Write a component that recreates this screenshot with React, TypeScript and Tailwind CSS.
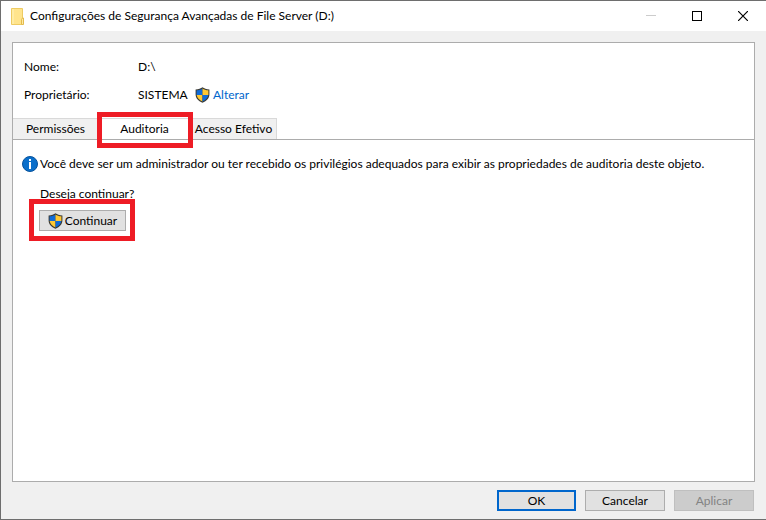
import { useState } from "react";

const tabs = ["Permissões", "Auditoria", "Acesso Efetivo"] as const;

const tabWidths = {
  Permissões: "w-[86px]",
  Auditoria: "w-[92px]",
  "Acesso Efetivo": "w-[86px]",
};

function FolderIcon() {
  return (
    <svg width="14" height="17" viewBox="0 0 14 17" aria-hidden="true">
      <path d="M0.5 0.5h11v16h-11z" fill="#ffe48c" stroke="#eecb62" />
      <path d="M1 1h2v15H1z" fill="#ffeca4" />
      <path d="M10.5 16.5v-5l1-1.5h1v6.5z" fill="#ffe9a2" stroke="#e3bb4c" />
    </svg>
  );
}

function ShieldIcon() {
  return (
    <svg width="15" height="16" viewBox="0 0 15 16" className="shrink-0" aria-hidden="true">
      <path
        d="M7.5 0.3C5.8 1.6 3.6 2.3 0.6 2.4v4.8c0 3.8 2.6 6.7 6.9 8.5 4.3-1.8 6.9-4.7 6.9-8.5V2.4c-3-.1-5.2-.8-6.9-2.1z"
        fill="#3b3a34"
      />
      <path d="M7.5 1.5C6 2.6 4 3.2 1.6 3.3V8h5.9z" fill="#0f6bd8" />
      <path d="M7.5 1.5c1.5 1.1 3.5 1.7 5.9 1.8V8H7.5z" fill="#ffc832" />
      <path d="M1.7 8c.4 2.9 2.4 5.1 5.8 6.6V8z" fill="#ffc832" />
      <path d="M13.3 8c-.4 2.9-2.4 5.1-5.8 6.6V8z" fill="#0f6bd8" />
    </svg>
  );
}

function InfoIcon() {
  return (
    <svg width="16" height="16" viewBox="0 0 16 16" className="shrink-0" aria-hidden="true">
      <circle cx="8" cy="8" r="7.5" fill="#0a6fcb" stroke="#07529c" />
      <path d="M7 3h2v2H7zM7 6h2v7H7z" fill="#fff" />
    </svg>
  );
}

function TitleBar() {
  return (
    <header className="flex h-[30px] items-center bg-white pl-[10px]">
      <FolderIcon />
      <h1 className="ml-[5px] flex-1 whitespace-nowrap">
        Configurações de Segurança Avançadas de File Server (D:)
      </h1>
      <button type="button" disabled aria-label="Minimizar" className="flex h-full w-[46px] items-center justify-center">
        <svg width="10" height="10" viewBox="0 0 10 10" shapeRendering="crispEdges">
          <path d="M0 4h10v1H0z" fill="#cccccc" />
        </svg>
      </button>
      <button type="button" aria-label="Maximizar" className="flex h-full w-[46px] items-center justify-center">
        <svg width="10" height="10" viewBox="0 0 10 10" shapeRendering="crispEdges">
          <path d="M0.5 0.5h9v9h-9z" fill="none" stroke="#000" />
        </svg>
      </button>
      <button type="button" aria-label="Fechar" className="flex h-full w-[46px] items-center justify-center">
        <svg width="10" height="10" viewBox="0 0 10 10">
          <path d="M0 0l10 10M10 0L0 10" stroke="#000" strokeWidth="1.2" />
        </svg>
      </button>
    </header>
  );
}

export default function App() {
  const [activeTab, setActiveTab] = useState<(typeof tabs)[number]>("Auditoria");

  return (
    <div className="flex min-h-screen flex-col border-t border-b border-l border-[#6e6e6e] bg-[#f0f0f0] font-['Lato','Open_Sans',sans-serif] text-[12px] leading-4 text-black">
      <TitleBar />

      <main className="mx-[11px] mt-[11px] flex flex-1 flex-col border border-[#acacac] bg-white">
        <dl className="grid grid-cols-[114px_1fr] gap-y-3 pt-4 pl-[11px]">
          <dt>Nome:</dt>
          <dd>D:\</dd>
          <dt>Proprietário:</dt>
          <dd className="flex items-center">
            <span className="w-[57px]">SISTEMA</span>
            <a href="#alterar" className="flex items-center gap-[3px] text-[#0066cc]">
              <ShieldIcon />
              Alterar
            </a>
          </dd>
        </dl>

        <div role="tablist" className="mt-[15px] flex h-[22px] border-b border-[#acacac]">
          {tabs.map((tab) => (
            <div key={tab} className={`relative ${tabWidths[tab]}`}>
              <button
                type="button"
                role="tab"
                aria-selected={tab === activeTab}
                onClick={() => setActiveTab(tab)}
                className={`h-[21px] w-full border-t border-r border-[#d9d9d9] whitespace-nowrap ${
                  tab === activeTab ? "bg-white" : "bg-[#f0f0f0]"
                }`}
              >
                {tab}
              </button>
              {tab === "Auditoria" ? (
                <span className="pointer-events-none absolute -inset-x-[2px] -top-[6px] -bottom-[9px] z-10 border-[5px] border-[#ee1c25]" />
              ) : null}
            </div>
          ))}
        </div>

        <section role="tabpanel" className="flex flex-1 flex-col items-start pt-4 pl-[9px]">
          <p className="flex items-center gap-[2px] whitespace-nowrap">
            <InfoIcon />
            Você deve ser um administrador ou ter recebido os privilégios adequados para exibir as propriedades de auditoria deste objeto.
          </p>
          <p className="mt-[14px] ml-[18px]">Deseja continuar?</p>
          <div className="relative mt-2 ml-[17px]">
            <button
              type="button"
              className="flex h-[21px] w-[87px] items-center justify-center gap-[2px] border border-[#adadad] bg-[#e1e1e1]"
            >
              <ShieldIcon />
              Continuar
            </button>
            <span className="pointer-events-none absolute -top-[11px] -right-[9px] -bottom-[10px] -left-[10px] border-[5px] border-[#ee1c25]" />
          </div>
        </section>
      </main>

      <footer className="flex justify-end gap-[9px] pt-2 pr-3 pb-2">
        <button type="button" className="h-[21px] w-[79px] border-2 border-[#0066cc] bg-[#e1e1e1]">
          OK
        </button>
        <button type="button" className="h-[21px] w-20 border border-[#adadad] bg-[#e1e1e1]">
          Cancelar
        </button>
        <button type="button" disabled className="h-[21px] w-20 border border-[#bfbfbf] bg-[#cccccc] text-[#838383]">
          Aplicar
        </button>
      </footer>
    </div>
  );
}
